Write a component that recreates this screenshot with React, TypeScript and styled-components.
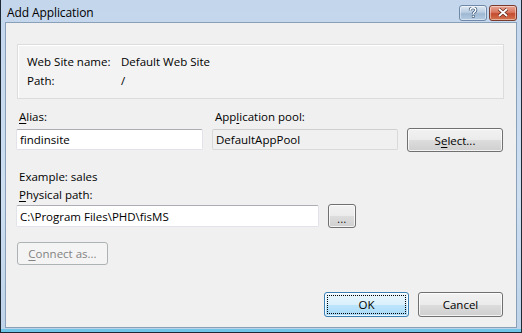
import styled, { createGlobalStyle } from 'styled-components';

const GlobalStyle = createGlobalStyle`
  html, body {
    margin: 0;
    padding: 0;
    background: #ffffff;
  }
  body {
    font-family: 'Open Sans', 'Noto Sans', sans-serif;
    font-size: 11.5px;
    color: #000000;
  }
`;

const Window = styled.div`
  width: 522px;
  height: 333px;
  box-sizing: border-box;
  display: flex;
  flex-direction: column;
  border: 1px solid #1d2935;
  border-top: none;
  background: linear-gradient(to bottom, #c3d6ec 0%, #cddff1 60%, #bed3e9 100%);
  padding: 0 4px 4px 4px;
  box-shadow: inset 0 -3px 0 #6fc6e6;
`;

const TitleBar = styled.div`
  height: 22px;
  display: flex;
  align-items: center;
  justify-content: space-between;
  padding: 2px 0 0 2px;
  box-sizing: border-box;
`;

const Title = styled.span`
  font-size: 12px;
  color: #000000;
  letter-spacing: -0.1px;
`;

const Caption = styled.div`
  display: flex;
  gap: 2px;
  margin-top: 1px;
`;

const CaptionButton = styled.div<{ $close?: boolean }>`
  width: 28px;
  height: 16px;
  box-sizing: border-box;
  border: 1px solid ${(p) => (p.$close ? '#7a3a2c' : '#6f8aa8')};
  border-radius: 3px;
  display: flex;
  align-items: center;
  justify-content: center;
  background: ${(p) =>
    p.$close
      ? 'linear-gradient(to bottom, #e8a594 0%, #d9775f 45%, #c44b2f 55%, #d3744f 100%)'
      : 'linear-gradient(to bottom, #dfe8f2 0%, #b9cde2 45%, #9fb8d3 55%, #b4cbe2 100%)'};
  box-shadow: inset 0 0 0 1px rgba(255, 255, 255, 0.45);
`;

const Client = styled.div`
  flex: 1;
  background: #f0f0f0;
  border: 1px solid #8aa0b8;
  display: flex;
  flex-direction: column;
  padding: 21px 12px 10px 10px;
`;

const InfoBox = styled.div`
  border: 1px solid #dcdcdc;
  background: #f3f3f3;
  box-shadow: inset 1px 1px 0 #ffffff;
  width: 487px;
  margin-left: 1px;
  box-sizing: border-box;
  display: grid;
  grid-template-columns: 94px auto;
  grid-auto-rows: 19px;
  align-items: center;
  padding: 7px 9px 8px 9px;
`;

const Text = styled.span`
  line-height: 15px;
  white-space: nowrap;
`;

const Form = styled.div`
  display: grid;
  grid-template-columns: 187px 186px 96px;
  column-gap: 9px;
  margin-top: 10px;
`;

const Label = styled.label`
  display: block;
  line-height: 15px;
  padding-left: 3px;
  margin-bottom: 5px;
`;

const Field = styled.div<{ $readOnly?: boolean; $w?: number; $h?: number }>`
  box-sizing: border-box;
  height: ${(p) => p.$h ?? 21}px;
  width: ${(p) => (p.$w ? `${p.$w}px` : '100%')};
  border: 1px solid ${(p) => (p.$readOnly ? '#d9d9d9' : '#e2e3ea')};
  border-top-color: ${(p) => (p.$readOnly ? '#cfcfcf' : '#abadb3')};
  border-radius: 2px;
  background: ${(p) => (p.$readOnly ? '#f0f0f0' : '#ffffff')};
  display: flex;
  align-items: center;
  padding-left: 3px;
  white-space: nowrap;
  overflow: hidden;
`;

const Button = styled.div<{ $w: number; $h?: number; $default?: boolean; $disabled?: boolean }>`
  box-sizing: border-box;
  width: ${(p) => p.$w}px;
  height: ${(p) => p.$h ?? 23}px;
  border: 1px solid ${(p) => (p.$disabled ? '#adb2b5' : p.$default ? '#3c7fb1' : '#707070')};
  border-radius: 3px;
  display: flex;
  align-items: center;
  justify-content: center;
  white-space: nowrap;
  color: ${(p) => (p.$disabled ? '#838383' : '#000000')};
  background: ${(p) =>
    p.$disabled
      ? '#f4f4f4'
      : p.$default
        ? 'linear-gradient(to bottom, #eaf6fd 0%, #d9f0fc 50%, #bee6fd 50%, #a7d9f5 100%)'
        : 'linear-gradient(to bottom, #f2f2f2 0%, #ebebeb 50%, #dddddd 50%, #cfcfcf 100%)'};
  box-shadow: inset 0 0 0 1px ${(p) => (p.$disabled ? '#f4f4f4' : 'rgba(255,255,255,0.75)')};
  position: relative;
`;

const BrowseButton = styled(Button)`
  align-items: flex-end;
  padding-bottom: 3px;
  font-size: 10px;
  line-height: 10px;
  letter-spacing: 0.5px;
`;

const SelectButton = styled(Button)`
  margin-top: 19px;
`;

const FocusRect = styled.span`
  position: absolute;
  inset: 2px;
  border: 1px dotted #000000;
  border-radius: 1px;
`;

const Row = styled.div<{ $gap: number; $top: number }>`
  display: flex;
  align-items: center;
  gap: ${(p) => p.$gap}px;
  margin-top: ${(p) => p.$top}px;
`;

const Example = styled.div`
  line-height: 15px;
  padding-left: 3px;
  margin-top: 17px;
`;

const PathLabel = styled(Label)`
  margin-top: 3px;
  margin-bottom: 2px;
`;

const ConnectRow = styled(Row)`
  padding-left: 1px;
`;

const Footer = styled.div`
  margin-top: auto;
  display: flex;
  justify-content: flex-end;
  gap: 9px;
  padding-right: 1px;
`;

const U = styled.span`
  text-decoration: underline;
  text-underline-offset: 2px;
`;

export default function App() {
  return (
    <>
      <GlobalStyle />
      <Window>
        <TitleBar>
          <Title>Add Application</Title>
          <Caption>
            <CaptionButton>
              <svg width="10" height="11" viewBox="0 0 10 11">
                <path
                  d="M2.3 3.4 C2.3 1.6 3.6 0.8 5 0.8 C6.6 0.8 7.8 1.7 7.8 3.1 C7.8 4.3 7 4.8 6.2 5.3 C5.5 5.7 5.3 6.1 5.3 6.9"
                  fill="none"
                  stroke="#3e5a7a"
                  strokeWidth="3"
                />
                <path
                  d="M2.3 3.4 C2.3 1.6 3.6 0.8 5 0.8 C6.6 0.8 7.8 1.7 7.8 3.1 C7.8 4.3 7 4.8 6.2 5.3 C5.5 5.7 5.3 6.1 5.3 6.9"
                  fill="none"
                  stroke="#ffffff"
                  strokeWidth="1.5"
                />
                <rect x="3.9" y="8" width="2.8" height="2.6" fill="#3e5a7a" />
                <rect x="4.5" y="8.6" width="1.6" height="1.4" fill="#ffffff" />
              </svg>
            </CaptionButton>
            <CaptionButton $close>
              <svg width="12" height="9" viewBox="0 0 12 9">
                <path d="M2 1 L10 8 M10 1 L2 8" stroke="#5b2418" strokeWidth="3.2" />
                <path d="M2 1 L10 8 M10 1 L2 8" stroke="#ffffff" strokeWidth="1.8" />
              </svg>
            </CaptionButton>
          </Caption>
        </TitleBar>
        <Client>
          <InfoBox>
            <Text>Web Site name:</Text>
            <Text>Default Web Site</Text>
            <Text>Path:</Text>
            <Text>/</Text>
          </InfoBox>
          <Form>
            <div>
              <Label>
                <U>A</U>lias:
              </Label>
              <Field>findinsite</Field>
            </div>
            <div>
              <Label>
                App<U>l</U>ication pool:
              </Label>
              <Field $readOnly>DefaultAppPool</Field>
            </div>
            <div>
              <SelectButton $w={96} $h={24}>
                S<U>e</U>lect...
              </SelectButton>
            </div>
          </Form>
          <Example>Example: sales</Example>
          <PathLabel>
            <U>P</U>hysical path:
          </PathLabel>
          <Row $gap={9} $top={0}>
            <Field $w={303} $h={22}>
              C:\Program Files\PHD\fisMS
            </Field>
            <BrowseButton $w={28} $h={24}>
              ...
            </BrowseButton>
          </Row>
          <ConnectRow $gap={0} $top={14}>
            <Button $w={91} $disabled>
              <U>C</U>onnect as...
            </Button>
          </ConnectRow>
          <Footer>
            <Button $w={85} $h={25} $default>
              <FocusRect />
              OK
            </Button>
            <Button $w={85} $h={25}>
              Cancel
            </Button>
          </Footer>
        </Client>
      </Window>
    </>
  );
}
